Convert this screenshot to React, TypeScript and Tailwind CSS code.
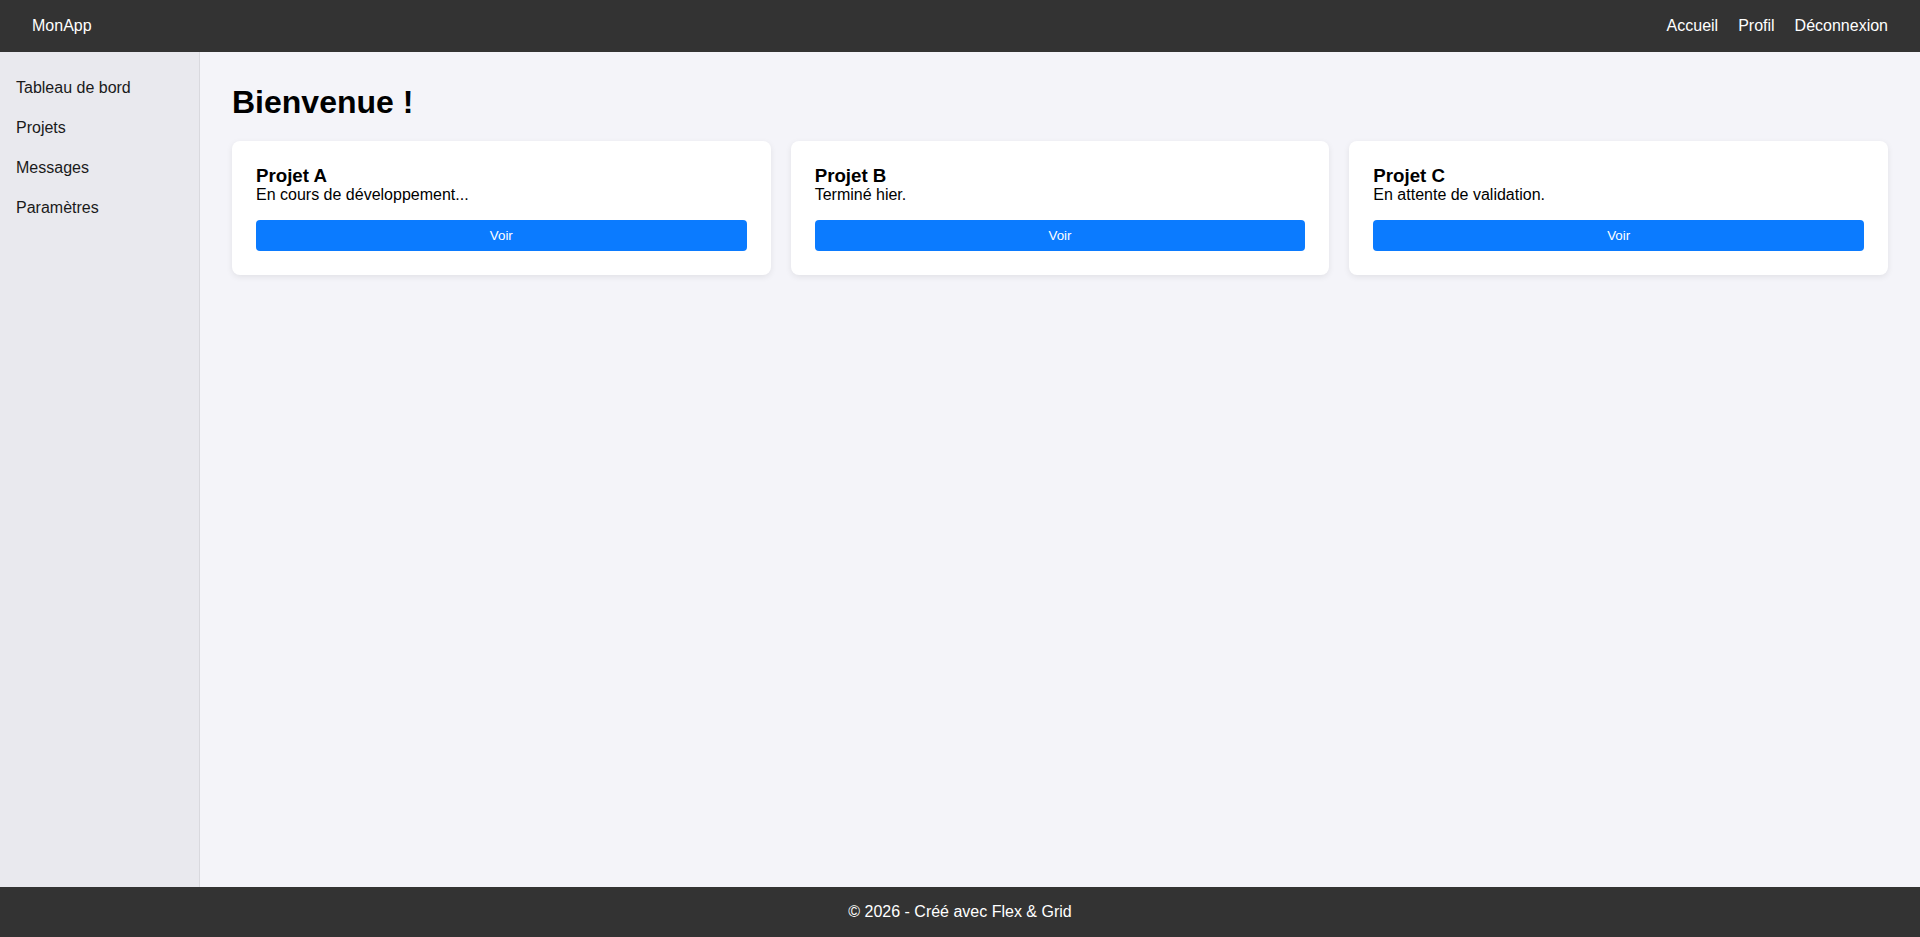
import { Fragment } from 'react';

const navLinks = ['Accueil', 'Profil', 'Déconnexion'];
const sideLinks = ['Tableau de bord', 'Projets', 'Messages', 'Paramètres'];

const projects = [
  { title: 'Projet A', status: 'En cours de développement...' },
  { title: 'Projet B', status: 'Terminé hier.' },
  { title: 'Projet C', status: 'En attente de validation.' },
];

function ProjectCard({ title, status }: { title: string; status: string }) {
  return (
    <div className="bg-white rounded-lg p-6 shadow-[0_2px_6px_rgba(0,0,0,0.08)]">
      <h3 className="text-[18.72px] font-bold leading-[21.5px] text-black">{title}</h3>
      <p className="text-base leading-[18.4px] text-black mb-[15px]">{status}</p>
      <button className="w-full bg-[#0b7bff] text-white text-[13.33px] leading-[15.3px] py-2 rounded">
        Voir
      </button>
    </div>
  );
}

export default function App() {
  return (
    <div className="min-h-screen flex flex-col font-['Liberation_Sans',Arial,sans-serif] text-base">
      {/* Top bar */}
      <header className="h-[52px] shrink-0 bg-[#333333] text-white flex items-center justify-between px-8">
        <div>MonApp</div>
        <nav className="flex items-center gap-5">
          {navLinks.map((link) => (
            <Fragment key={link}>
              <a href="#" className="text-white">
                {link}
              </a>
            </Fragment>
          ))}
        </nav>
      </header>

      <div className="flex flex-1">
        {/* Sidebar */}
        <aside className="w-[200px] shrink-0 bg-[#e9e9ee] border-r border-[#d9d9de] pt-4">
          <ul>
            {sideLinks.map((link) => (
              <li key={link} className="h-10 flex items-center px-4 text-[#1a1a1a]">
                {link}
              </li>
            ))}
          </ul>
        </aside>

        {/* Main content */}
        <main className="flex-1 bg-[#f4f4f9] p-8">
          <h1 className="text-[32px] font-bold leading-[36.8px] text-black mb-5">Bienvenue !</h1>
          <div className="grid grid-cols-3 gap-5">
            {projects.map((p) => (
              <ProjectCard key={p.title} title={p.title} status={p.status} />
            ))}
          </div>
        </main>
      </div>

      <footer className="h-[50px] shrink-0 bg-[#333333] text-white flex items-center justify-center">
        © 2026 - Créé avec Flex &amp; Grid
      </footer>
    </div>
  );
}
